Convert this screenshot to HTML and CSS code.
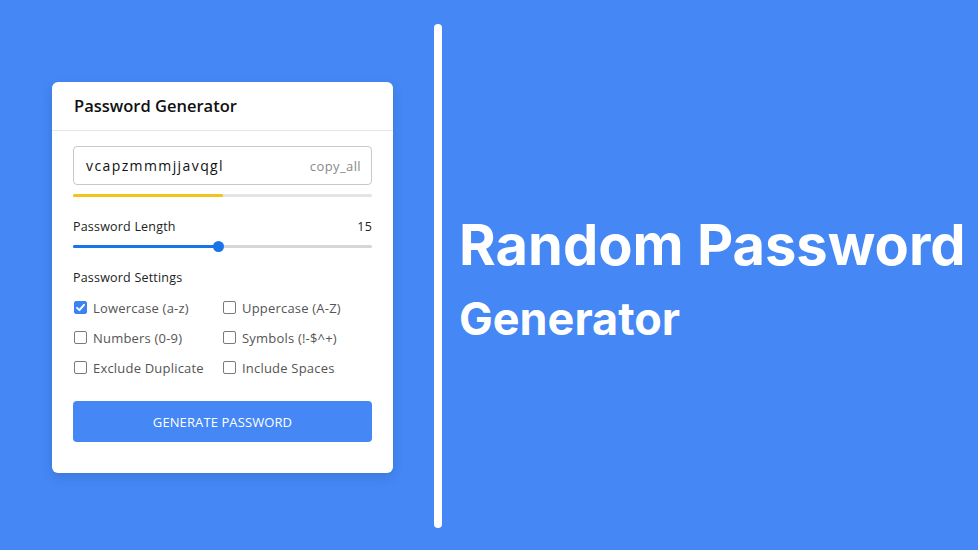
FILE: index.html
```html
<!DOCTYPE html>
<html>
<head>
<meta charset="utf-8">
<link rel="stylesheet" href="styles.css">
</head>
<body>
<div class="page">
  <div class="card">
    <div class="card-head">Password Generator</div>
    <div class="card-body">
      <div class="pw-box">
        <span class="pw-text">vcapzmmmjjavqgl</span>
        <span class="copy">copy_all</span>
      </div>
      <div class="strength"><div class="strength-fill" style="width:50%"></div></div>
      <div class="len-row">
        <span>Password Length</span>
        <span>15</span>
      </div>
      <div class="slider">
        <div class="slider-fill" style="width:48.5%"></div>
        <div class="slider-thumb"></div>
      </div>
      <div class="settings-title">Password Settings</div>
      <div class="options">
        <label class="opt"><span class="cb checked"><svg viewBox="0 0 13 13" width="13" height="13"><path d="M3 6.8 L5.4 9.2 L10 3.8" fill="none" stroke="#fff" stroke-width="1.9" stroke-linecap="round" stroke-linejoin="round"/></svg></span>Lowercase (a-z)</label>
        <label class="opt"><span class="cb"></span>Uppercase (A-Z)</label>
        <label class="opt"><span class="cb"></span>Numbers (0-9)</label>
        <label class="opt"><span class="cb"></span>Symbols (!-$^+)</label>
        <label class="opt"><span class="cb"></span>Exclude Duplicate</label>
        <label class="opt"><span class="cb"></span>Include Spaces</label>
      </div>
      <button class="gen-btn">GENERATE PASSWORD</button>
    </div>
  </div>
  <div class="divider"></div>
  <div class="hero">
    <h1 class="hero-title">Random Password</h1>
    <h2 class="hero-sub">Generator</h2>
  </div>
</div>
</body>
</html>
```
FILE: styles.css
```css
* { box-sizing: border-box; }
html, body { margin: 0; padding: 0; }
body {
  background: #4487f5;
  width: 978px;
  height: 550px;
  overflow: hidden;
  font-family: "Open Sans", "Noto Sans", sans-serif;
}
.page {
  display: flex;
  align-items: flex-start;
  padding-left: 52px;
  height: 550px;
}
.card {
  margin-top: 82px;
  width: 341px;
  height: 391px;
  background: #fff;
  border-radius: 6px;
  box-shadow: 0 4px 12px rgba(0,0,0,0.12);
}
.card-head {
  height: 49px;
  padding: 12px 22px 0;
  font-size: 16.5px;
  font-weight: 600;
  color: #111;
  border-bottom: 1px solid #e3e8ee;
}
.card-body {
  padding: 15px 21px 0;
}
.pw-box {
  height: 39px;
  border: 1px solid #c9c9c9;
  border-radius: 4px;
  display: flex;
  align-items: center;
  justify-content: space-between;
  padding: 0 10px 0 12px;
}
.pw-text {
  font-size: 14px;
  color: #111;
  letter-spacing: 1.4px;
}
.copy {
  font-size: 13px;
  color: #8a8a8a;
  letter-spacing: 0.4px;
}
.strength {
  margin-top: 9px;
  height: 3px;
  background: #e4e4e4;
  border-radius: 2px;
}
.strength-fill {
  height: 100%;
  background: #f3c419;
  border-radius: 2px;
}
.len-row {
  margin-top: 21px;
  display: flex;
  justify-content: space-between;
  font-size: 12.5px;
  color: #222;
  letter-spacing: 0.2px;
}
.slider {
  position: relative;
  margin-top: 10px;
  height: 3px;
  background: #d6d6d6;
  border-radius: 2px;
}
.slider-fill {
  height: 100%;
  background: #1a73e8;
  border-radius: 2px;
}
.slider-thumb {
  position: absolute;
  left: calc(48.5% - 5px);
  top: -4px;
  width: 11px;
  height: 11px;
  border-radius: 50%;
  background: #1a73e8;
}
.settings-title {
  margin-top: 21px;
  font-size: 12.5px;
  color: #222;
  letter-spacing: 0.2px;
}
.options {
  margin-top: 13px;
  display: grid;
  grid-template-columns: 149px 1fr;
  row-gap: 13px;
}
.opt {
  display: flex;
  align-items: center;
  font-size: 13px;
  color: #555;
  height: 17px;
  letter-spacing: 0.2px;
}
.cb {
  width: 13px;
  height: 13px;
  border: 1px solid #7a7a7a;
  border-radius: 2px;
  margin-left: 1px;
  margin-right: 6px;
  display: inline-flex;
}
.cb.checked {
  background: #3b82f6;
  border-color: #3b82f6;
}
.cb svg { margin: -1px; }
.gen-btn {
  margin-top: 25px;
  width: 100%;
  height: 41px;
  border: none;
  border-radius: 4px;
  background: #4487f5;
  color: #fff;
  font-family: "Open Sans", "Noto Sans", sans-serif;
  font-size: 13px;
  letter-spacing: 0.1px;
}
.divider {
  margin-left: 41px;
  margin-top: 24px;
  width: 8px;
  height: 504px;
  border-radius: 4px;
  background: #fff;
}
.hero {
  margin-left: 17px;
  margin-top: 212px;
  color: #fff;
  font-family: Inter, sans-serif;
}
.hero-title {
  margin: 0;
  font-size: 56px;
  font-weight: 700;
  line-height: 67px;
}
.hero-sub {
  margin: 13px 0 0;
  font-size: 45px;
  font-weight: 700;
  line-height: 54px;
}
```
